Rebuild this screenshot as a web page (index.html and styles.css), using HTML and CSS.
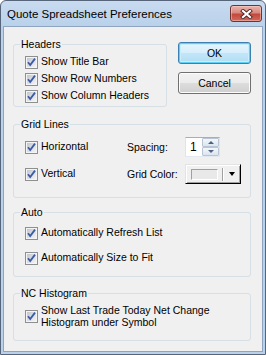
FILE: index.html
```html
<!DOCTYPE html>
<html lang="en">
<head>
    <meta charset="UTF-8">
    <title>Quote Spreadsheet Preferences</title>
    <link rel="stylesheet" href="styles.css">
</head>
<body>
    <div class="window">
        <div class="titlebar">
            <span class="title">Quote Spreadsheet Preferences</span>
            <button type="button" class="close-btn">
                <svg width="13" height="10" viewBox="0 0 13 10">
                    <path d="M3 2 L10 8 M10 2 L3 8" stroke="#4a2a2a" stroke-width="4" stroke-linecap="square"/>
                    <path d="M3 2 L10 8 M10 2 L3 8" stroke="#fff" stroke-width="2.2" stroke-linecap="square"/>
                </svg>
            </button>
        </div>

        <div class="client">
            <div class="top-row">
                <fieldset class="group group-headers">
                    <legend>Headers</legend>
                    <div class="group-body headers-body">
                        <label class="check"><svg><use href="#chk"/></svg><span>Show Title Bar</span></label>
                        <label class="check"><svg><use href="#chk"/></svg><span>Show Row Numbers</span></label>
                        <label class="check"><svg><use href="#chk"/></svg><span>Show Column Headers</span></label>
                    </div>
                </fieldset>
                <div class="buttons">
                    <button type="button" class="btn btn-default">OK</button>
                    <button type="button" class="btn">Cancel</button>
                </div>
            </div>

            <fieldset class="group group-grid">
                <legend>Grid Lines</legend>
                <div class="group-body grid-body">
                    <label class="check"><svg><use href="#chk"/></svg><span>Horizontal</span></label>
                    <span class="field-label">Spacing:</span>
                    <div class="spin">
                        <span class="spin-value">1</span>
                        <div class="spin-btns">
                            <span class="spin-btn spin-up"></span>
                            <span class="spin-btn spin-down"></span>
                        </div>
                    </div>

                    <label class="check"><svg><use href="#chk"/></svg><span>Vertical</span></label>
                    <span class="field-label">Grid Color:</span>
                    <div class="color-pick">
                        <span class="swatch"></span>
                        <span class="sep"></span>
                        <span class="arrow"></span>
                    </div>
                </div>
            </fieldset>

            <fieldset class="group group-auto">
                <legend>Auto</legend>
                <div class="group-body auto-body">
                    <label class="check"><svg><use href="#chk"/></svg><span>Automatically Refresh List</span></label>
                    <label class="check"><svg><use href="#chk"/></svg><span>Automatically Size to Fit</span></label>
                </div>
            </fieldset>

            <fieldset class="group group-nc">
                <legend>NC Histogram</legend>
                <div class="group-body nc-body">
                    <label class="check check-multi"><svg><use href="#chk"/></svg><span>Show Last Trade Today Net Change<br>Histogram under Symbol</span></label>
                </div>
            </fieldset>
        </div>
    </div>

    <svg class="defs" width="0" height="0">
        <defs>
            <linearGradient id="chk-fill" x1="0" y1="0" x2="1" y2="1">
                <stop offset="0" stop-color="#c2c6cd"/>
                <stop offset="1" stop-color="#f4f4f4"/>
            </linearGradient>
            <symbol id="chk" viewBox="0 0 13 13">
                <rect x="0.5" y="0.5" width="12" height="12" fill="#f4f4f4" stroke="#8e8f8f"/>
                <rect x="2" y="2" width="9" height="9" fill="url(#chk-fill)"/>
                <path d="M3 6.2 L5.2 9 L10 2.6" fill="none" stroke="#3b5ba6" stroke-width="1.8"/>
            </symbol>
        </defs>
    </svg>
</body>
</html>
```

FILE: styles.css
```css
body {
    margin: 0;
    font-family: "Liberation Sans", Arial, sans-serif;
    font-size: 10.5px;
    color: #000;
    background: #fff;
}

.window {
    width: 266px;
    height: 355px;
    box-sizing: border-box;
    border: 1px solid #56657a;
    border-radius: 6px 6px 0 0;
    background: linear-gradient(#c8dbf0, #b9d1ea 26px);
    display: flex;
    flex-direction: column;
}

.titlebar {
    height: 25px;
    display: flex;
    align-items: center;
    justify-content: space-between;
    padding-left: 6px;
}

.title {
    font-size: 11.5px;
}

.close-btn {
    align-self: flex-start;
    width: 32px;
    height: 17px;
    margin: 4px 3px 0 0;
    padding: 0;
    box-sizing: border-box;
    border: 1px solid #6e3431;
    border-radius: 3px;
    background: linear-gradient(#e9b3aa, #d98a7f 45%, #c4483c 55%, #d16a5c);
    box-shadow: inset 0 0 0 1px rgba(255, 220, 210, 0.45);
    display: flex;
    align-items: center;
    justify-content: center;
}

.close-btn svg {
    display: block;
}

.client {
    flex: 1;
    margin: 0 2px 2px;
    border: 1px solid #8ea4c0;
    background: #f0f0f0;
    padding: 11px 11px 0 9px;
}

.top-row {
    display: flex;
    align-items: flex-start;
    gap: 11px;
}

.group {
    margin: 0;
    padding: 0 0 0 6px;
    border: 1px solid #d5dfe5;
    border-radius: 3px;
    min-width: 0;
    box-sizing: border-box;
}

.group legend {
    padding: 0 1px;
    line-height: 13px;
}

.group-headers {
    width: 154px;
}

.group-grid {
    margin-top: 11px;
}

.group-auto {
    margin-top: 8px;
}

.group-nc {
    margin-top: 10px;
}

.headers-body {
    display: flex;
    flex-direction: column;
    gap: 4px;
    padding: 5px 0 3px 5px;
}

.grid-body {
    display: grid;
    grid-template-columns: 102px 1fr auto;
    grid-auto-rows: 20px;
    row-gap: 7px;
    align-items: center;
    padding: 6px 9px 13px 5px;
}

.auto-body {
    display: flex;
    flex-direction: column;
    gap: 12px;
    padding: 8px 0 11px 5px;
}

.nc-body {
    padding: 4px 0 12px 5px;
}

.check {
    display: flex;
    align-items: flex-start;
    gap: 3px;
    white-space: nowrap;
}

.check svg {
    width: 13px;
    height: 13px;
    flex: none;
}

.check span {
    line-height: 10px;
}

.check-multi {
    align-items: center;
}

.check-multi span {
    line-height: 12px;
}

.field-label {
    line-height: 10px;
}

.buttons {
    display: flex;
    flex-direction: column;
    gap: 8px;
    margin-top: 4px;
}

.btn {
    width: 73px;
    height: 22px;
    padding: 0;
    border: 1px solid #707070;
    border-radius: 3px;
    background: linear-gradient(#f2f2f2, #ebebeb 50%, #dddddd 50%, #cfcfcf);
    box-shadow: inset 0 0 0 1px #fcfcfc;
    font: inherit;
    color: #000;
}

.btn-default {
    border-color: #3c7fb1;
    background: linear-gradient(#e6f5fc, #d6eefb 50%, #c2e6f8 50%, #b2ddf3);
    box-shadow: inset 0 0 0 1px #5fd0f5, inset 0 0 0 2px #c8eefb;
}

.spin {
    width: 35px;
    height: 20px;
    box-sizing: border-box;
    border: 1px solid #abadb3;
    border-color: #abadb3 #e2e3ea #e3e9ef #e2e3ea;
    background: #fff;
    display: flex;
    align-items: center;
    justify-content: space-between;
}

.spin-value {
    padding-left: 4px;
    font-size: 12px;
}

.spin-btns {
    display: flex;
    flex-direction: column;
    width: 17px;
    height: 18px;
}

.spin-btn {
    flex: 1;
    box-sizing: border-box;
    border: 1px solid #b9c5d4;
    border-radius: 1px;
    background: linear-gradient(#f4f7fb, #dbe4ef);
    display: flex;
    align-items: center;
    justify-content: center;
}

.spin-up::before,
.spin-down::before {
    content: "";
    width: 0;
    height: 0;
    border-left: 3px solid transparent;
    border-right: 3px solid transparent;
}

.spin-up::before {
    border-bottom: 3px solid #4d6185;
}

.spin-down::before {
    border-top: 3px solid #4d6185;
}

.color-pick {
    width: 56px;
    height: 20px;
    box-sizing: border-box;
    border: 1px solid;
    border-color: #e3e3e3 #000 #000 #e3e3e3;
    box-shadow: inset 1px 1px #fff, inset -1px -1px #a0a0a0;
    background: #f0f0f0;
    display: flex;
    align-items: center;
    padding-left: 5px;
}

.swatch {
    width: 27px;
    height: 11px;
    box-sizing: border-box;
    border: 1px solid;
    border-color: #a0a0a0 #fff #fff #a0a0a0;
    background: #e9e9e9;
}

.sep {
    width: 1px;
    height: 13px;
    margin-left: 4px;
    background: #a0a0a0;
    box-shadow: 1px 0 #fff;
}

.arrow {
    margin-left: 6px;
    width: 0;
    height: 0;
    border-left: 3.5px solid transparent;
    border-right: 3.5px solid transparent;
    border-top: 4px solid #000;
}

.defs {
    display: block;
    width: 0;
    height: 0;
}
```
